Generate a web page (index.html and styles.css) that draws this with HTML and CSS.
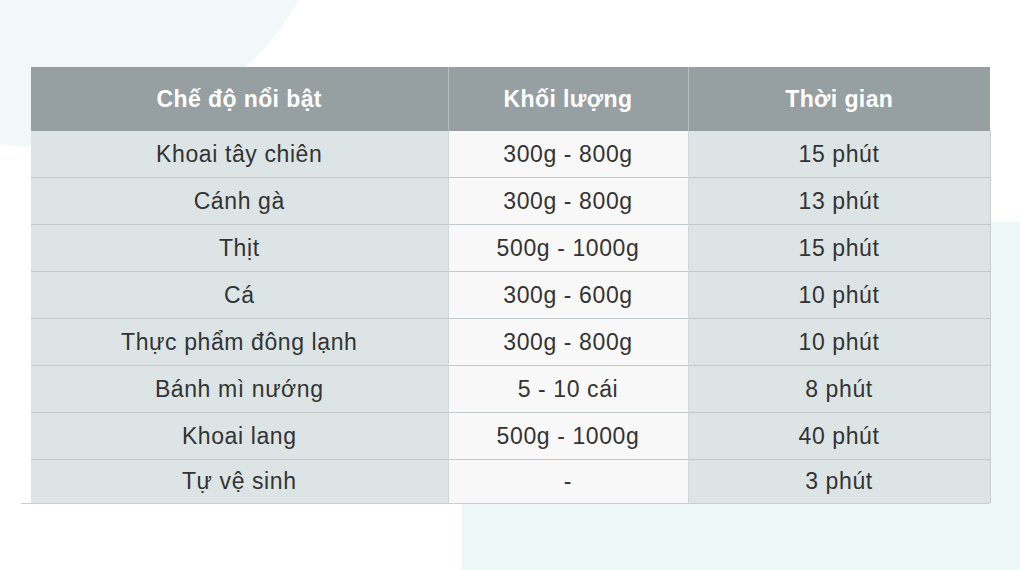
FILE: index.html
```html
<!DOCTYPE html>
<html lang="vi">
<head>
<meta charset="utf-8">
<link rel="stylesheet" href="styles.css">
</head>
<body>
<div class="blob-br"></div>
<main class="page">
  <div class="table-wrap">
    <table class="spec">
      <colgroup>
        <col class="c1"><col class="c2"><col class="c3">
      </colgroup>
      <thead>
        <tr><th>Chế độ nổi bật</th><th>Khối lượng</th><th>Thời gian</th></tr>
      </thead>
      <tbody>
        <tr><td>Khoai tây chiên</td><td>300g - 800g</td><td>15 phút</td></tr>
        <tr><td>Cánh gà</td><td>300g - 800g</td><td>13 phút</td></tr>
        <tr><td>Thịt</td><td>500g - 1000g</td><td>15 phút</td></tr>
        <tr><td>Cá</td><td>300g - 600g</td><td>10 phút</td></tr>
        <tr><td>Thực phẩm đông lạnh</td><td>300g - 800g</td><td>10 phút</td></tr>
        <tr><td>Bánh mì nướng</td><td>5 - 10 cái</td><td>8 phút</td></tr>
        <tr><td>Khoai lang</td><td>500g - 1000g</td><td>40 phút</td></tr>
        <tr><td>Tự vệ sinh</td><td>-</td><td>3 phút</td></tr>
      </tbody>
    </table>
  </div>
</main>
</body>
</html>
```

FILE: styles.css
```css
html, body {
  margin: 0;
  padding: 0;
}
html {
  overflow: hidden;
}
body {
  width: 1020px;
  height: 570px;
  position: relative;
  overflow: hidden;
  font-family: "Liberation Sans", Arial, sans-serif;
  background: radial-gradient(circle 293px at 45px -145px, #f2f8fa 99.6%, rgba(255,255,255,0) 100%) no-repeat, #ffffff;
}
.blob-br {
  position: absolute;
  z-index: 0;
  left: 462px;
  top: 222px;
  width: 558px;
  height: 348px;
  border-radius: 36px 0 0 0;
  background: #eef8f8;
}
.page {
  position: relative;
  z-index: 1;
  padding: 67px 0 0 21px;
}
.table-wrap {
  width: 969px;
  padding-left: 10px;
  box-sizing: border-box;
  border-bottom: 1px solid #c9cfd1;
}
.spec {
  border-collapse: collapse;
  table-layout: fixed;
  width: 959px;
}
.c1 { width: 417px; }
.c2 { width: 240px; }
.c3 { width: 302px; }
.spec th {
  height: 64px;
  padding: 0;
  background: #969fa2;
  color: #ffffff;
  font-size: 23px;
  font-weight: bold;
  letter-spacing: 0.4px;
  text-align: center;
  border-left: 1px solid #b4bbbd;
}
.spec th:first-child {
  border-left: none;
}
.spec td {
  height: 46px;
  padding: 0;
  text-align: center;
  font-size: 23px;
  letter-spacing: 0.6px;
  color: #333333;
  border-top: 1px solid #c3c9cb;
  border-left: 1px solid #d2d7d9;
}
.spec td:first-child {
  border-left: none;
  background: #dce4e6;
}
.spec td:nth-child(2) {
  background: #f8f8f8;
}
.spec td:nth-child(3) {
  background: #dce4e6;
  border-right: 1px solid #c9cfd1;
}
.spec tbody tr:first-child td {
  border-top: none;
  height: 46px;
}
.spec tbody tr:last-child td {
  height: 43px;
}
```
